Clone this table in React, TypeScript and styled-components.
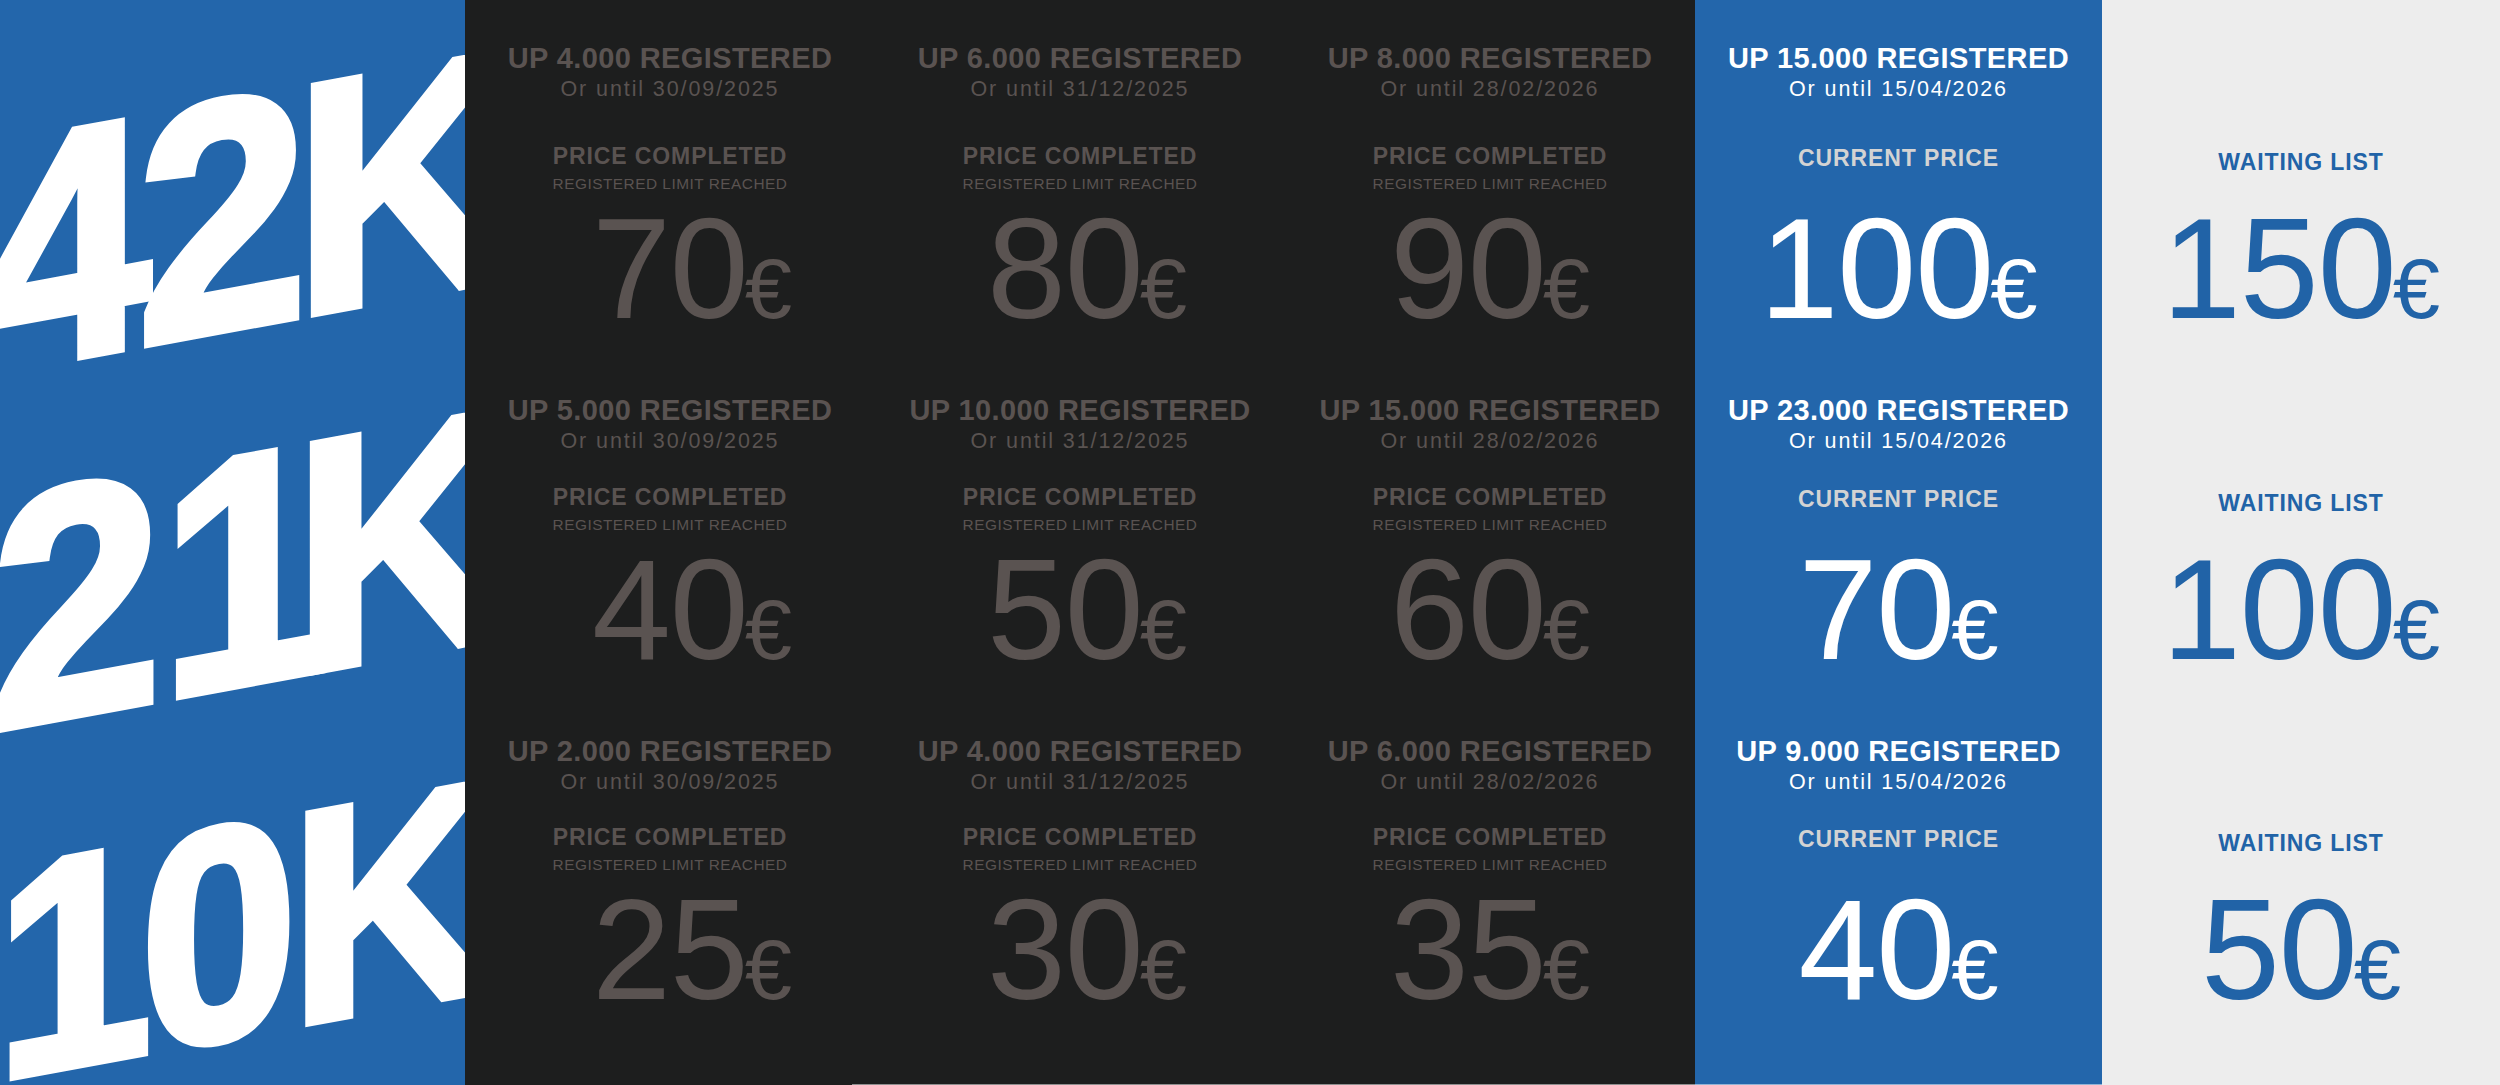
import React from 'react';
import styled, { createGlobalStyle } from 'styled-components';

const GlobalStyle = createGlobalStyle`
  html, body { margin: 0; padding: 0; background: #1d1e1e; }
  body { font-family: "Liberation Sans", Arial, sans-serif; }
`;

type Variant = 'done' | 'current' | 'waiting';

const palette: Record<Variant, { bg: string; head: string; date: string; label: string; sub: string; price: string }> = {
  done: { bg: '#1d1e1e', head: '#5a5351', date: '#5a5351', label: '#5a5351', sub: '#5a5351', price: '#5a5351' },
  current: { bg: '#2366ab', head: '#ffffff', date: '#ffffff', label: '#d3d3d3', sub: '#d3d3d3', price: '#ffffff' },
  waiting: { bg: '#ededed', head: '#2163a7', date: '#2163a7', label: '#2163a7', sub: '#2163a7', price: '#2163a7' },
};

const ROWS = [
  { h: 342, headPad: 44 },
  { h: 339, headPad: 54 },
  { h: 404, headPad: 56 },
];

const Board = styled.div`
  position: relative;
  width: 2500px;
  height: 1085px;
  display: grid;
  grid-template-columns: 465px 410px 410px 410px 407px 398px;
  overflow: hidden;
`;

const DistanceColumn = styled.div`
  background: #2366ab;
  overflow: hidden;
  display: flex;
  flex-direction: column;
`;

const DistanceRow = styled.div<{ $h: number; $top: number; $overhang: number }>`
  flex: none;
  height: ${(p) => p.$h}px;
  box-sizing: border-box;
  padding-top: ${(p) => p.$top}px;
  margin-right: ${(p) => -p.$overhang}px;
  display: flex;
  justify-content: flex-end;
  align-items: flex-start;
`;

const DistanceText = styled.span<{ $size: number }>`
  display: block;
  font-family: "Liberation Sans", Arial, sans-serif;
  font-weight: 700;
  font-size: ${(p) => p.$size}px;
  line-height: 1;
  letter-spacing: -0.045em;
  color: #ffffff;
  -webkit-text-stroke: 8px #ffffff;
  white-space: nowrap;
  transform-origin: 100% 100%;
  transform: skewY(-10.4deg) scaleX(0.93);
`;

const Glyph = styled.span<{ $kern: number }>`
  margin-right: ${(p) => p.$kern}px;
`;

const PriceColumn = styled.div<{ $variant: Variant }>`
  background: ${(p) => palette[p.$variant].bg};
  display: flex;
  flex-direction: column;
  font-family: "Liberation Sans", Arial, sans-serif;
`;

const Tier = styled.div<{ $h: number }>`
  flex: none;
  height: ${(p) => p.$h}px;
  display: flex;
  flex-direction: column;
  align-items: stretch;
`;

const HeadBlock = styled.div<{ $pad: number }>`
  height: 145px;
  box-sizing: border-box;
  padding-top: ${(p) => p.$pad}px;
  display: flex;
  flex-direction: column;
  align-items: center;
`;

const Heading = styled.div<{ $variant: Variant }>`
  font-size: 29px;
  font-weight: 700;
  line-height: 1;
  letter-spacing: 0.4px;
  white-space: nowrap;
  color: ${(p) => palette[p.$variant].head};
`;

const DateLine = styled.div<{ $variant: Variant }>`
  margin-top: 6px;
  font-size: 21.5px;
  font-weight: 400;
  line-height: 1;
  letter-spacing: 1.9px;
  white-space: nowrap;
  color: ${(p) => palette[p.$variant].date};
`;

const LabelBlock = styled.div<{ $shift: number }>`
  height: 53px;
  box-sizing: border-box;
  padding-top: ${(p) => p.$shift}px;
  display: flex;
  flex-direction: column;
  align-items: center;
`;

const Label = styled.div<{ $variant: Variant }>`
  font-size: 23px;
  font-weight: 700;
  line-height: 1;
  letter-spacing: 0.9px;
  white-space: nowrap;
  color: ${(p) => palette[p.$variant].label};
`;

const SubLabel = styled.div<{ $variant: Variant }>`
  margin-top: 8px;
  font-size: 15.4px;
  font-weight: 400;
  line-height: 1;
  letter-spacing: 0.5px;
  white-space: nowrap;
  color: ${(p) => palette[p.$variant].sub};
`;

const PriceBlock = styled.div<{ $offset: number }>`
  display: flex;
  justify-content: center;
  padding-left: ${(p) => p.$offset}px;
`;

const Price = styled.div<{ $variant: Variant }>`
  font-size: 142px;
  font-weight: 400;
  line-height: 1;
  letter-spacing: -1px;
  white-space: nowrap;
  color: ${(p) => palette[p.$variant].price};
`;

const Euro = styled.span`
  font-size: 85px;
  margin-left: -3px;
  letter-spacing: 0;
`;

const BottomRule = styled.div`
  position: absolute;
  left: 852px;
  bottom: 0;
  width: 1250px;
  height: 1px;
  background: rgba(255, 255, 255, 0.5);
`;

type TierData = { head?: string; date?: string; price: string };
type ColumnData = { variant: Variant; label: string; sub?: string; priceOffset: number; labelShift: number; tiers: TierData[] };

const columns: ColumnData[] = [
  {
    variant: 'done',
    label: 'PRICE COMPLETED',
    sub: 'REGISTERED LIMIT REACHED',
    priceOffset: 44,
    labelShift: 0,
    tiers: [
      { head: 'UP 4.000 REGISTERED', date: 'Or until 30/09/2025', price: '70' },
      { head: 'UP 5.000 REGISTERED', date: 'Or until 30/09/2025', price: '40' },
      { head: 'UP 2.000 REGISTERED', date: 'Or until 30/09/2025', price: '25' },
    ],
  },
  {
    variant: 'done',
    label: 'PRICE COMPLETED',
    sub: 'REGISTERED LIMIT REACHED',
    priceOffset: 14,
    labelShift: 0,
    tiers: [
      { head: 'UP 6.000 REGISTERED', date: 'Or until 31/12/2025', price: '80' },
      { head: 'UP 10.000 REGISTERED', date: 'Or until 31/12/2025', price: '50' },
      { head: 'UP 4.000 REGISTERED', date: 'Or until 31/12/2025', price: '30' },
    ],
  },
  {
    variant: 'done',
    label: 'PRICE COMPLETED',
    sub: 'REGISTERED LIMIT REACHED',
    priceOffset: 0,
    labelShift: 0,
    tiers: [
      { head: 'UP 8.000 REGISTERED', date: 'Or until 28/02/2026', price: '90' },
      { head: 'UP 15.000 REGISTERED', date: 'Or until 28/02/2026', price: '60' },
      { head: 'UP 6.000 REGISTERED', date: 'Or until 28/02/2026', price: '35' },
    ],
  },
  {
    variant: 'current',
    label: 'CURRENT PRICE',
    priceOffset: 0,
    labelShift: 2,
    tiers: [
      { head: 'UP 15.000 REGISTERED', date: 'Or until 15/04/2026', price: '100' },
      { head: 'UP 23.000 REGISTERED', date: 'Or until 15/04/2026', price: '70' },
      { head: 'UP 9.000 REGISTERED', date: 'Or until 15/04/2026', price: '40' },
    ],
  },
  {
    variant: 'waiting',
    label: 'WAITING LIST',
    priceOffset: 0,
    labelShift: 6,
    tiers: [{ price: '150' }, { price: '100' }, { price: '50' }],
  },
];

const distances: { glyphs: [string, number][]; size: number; top: number; overhang: number }[] = [
  { glyphs: [['4', 0], ['2', 0], ['K', 0]], size: 330, top: 0, overhang: 37 },
  { glyphs: [['2', 13], ['1', -26], ['K', 0]], size: 330, top: 16, overhang: 36 },
  { glyphs: [['1', 1], ['0', 6], ['K', 0]], size: 303, top: 54, overhang: 16 },
];

export default function App() {
  return (
    <>
      <GlobalStyle />
      <Board>
        <DistanceColumn>
          {distances.map((d, i) => (
            <DistanceRow key={i} $h={ROWS[i].h} $top={d.top} $overhang={d.overhang}>
              <DistanceText $size={d.size}>
                {d.glyphs.map(([ch, kern], gi) => (
                  <Glyph key={gi} $kern={kern}>
                    {ch}
                  </Glyph>
                ))}
              </DistanceText>
            </DistanceRow>
          ))}
        </DistanceColumn>
        {columns.map((col, ci) => (
          <PriceColumn key={ci} $variant={col.variant}>
            {col.tiers.map((t, ti) => (
              <Tier key={ti} $h={ROWS[ti].h}>
                <HeadBlock $pad={ROWS[ti].headPad}>
                  {t.head && <Heading $variant={col.variant}>{t.head}</Heading>}
                  {t.date && <DateLine $variant={col.variant}>{t.date}</DateLine>}
                </HeadBlock>
                <LabelBlock $shift={col.labelShift}>
                  <Label $variant={col.variant}>{col.label}</Label>
                  {col.sub && <SubLabel $variant={col.variant}>{col.sub}</SubLabel>}
                </LabelBlock>
                <PriceBlock $offset={col.priceOffset}>
                  <Price $variant={col.variant}>
                    {t.price}
                    <Euro>€</Euro>
                  </Price>
                </PriceBlock>
              </Tier>
            ))}
          </PriceColumn>
        ))}
        <BottomRule />
      </Board>
    </>
  );
}
